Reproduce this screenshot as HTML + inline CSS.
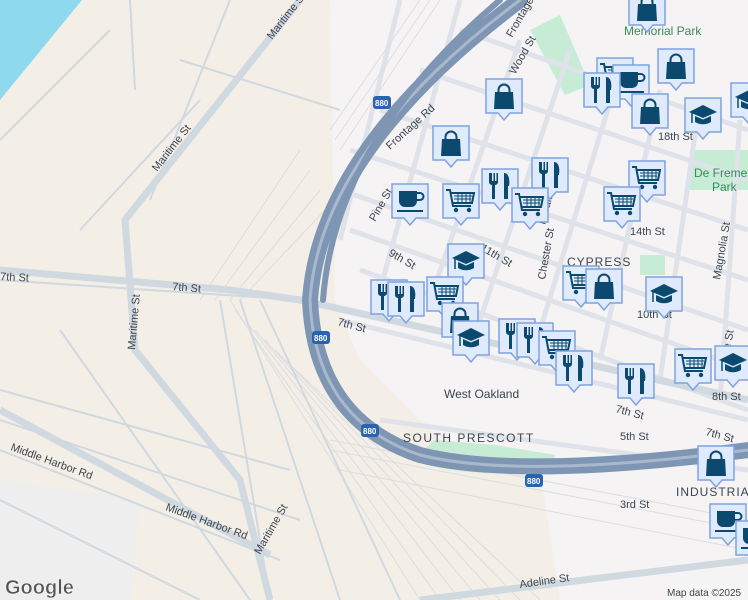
<!DOCTYPE html>
<html><head><meta charset="utf-8"><style>
html,body{margin:0;padding:0;width:748px;height:600px;overflow:hidden;background:#f3efe6}
svg{display:block}
text{font-family:"Liberation Sans",sans-serif}
</style></head><body>
<svg width="748" height="600" viewBox="0 0 748 600" xmlns="http://www.w3.org/2000/svg">
<defs>
<g id="m">
<path d="M1 1h36v34h-12l-6 7-6-7H1z" fill="#dfeafc" stroke="#7fa3e0" stroke-width="1.5"/>
</g>
<g id="shop"><use href="#m"/><path d="M10 14h18l1 17H9z" fill="#0b4a6e"/><path d="M13.5 15v-3a5.5 5.5 0 0 1 11 0v3" fill="none" stroke="#0b4a6e" stroke-width="2"/></g>
<g id="food"><use href="#m"/><path d="M8 5v9a3 3 0 0 0 3 3v14h3V17a3 3 0 0 0 3-3V5h-1.5v8h-1.5V5h-1.5v8h-1.5V5h-1.5v8H9.5V5z" fill="#0b4a6e"/><path d="M23 5c5 0 6 7 5 13h-1v13h-4z" fill="#0b4a6e"/></g>
<g id="cart"><use href="#m"/><path d="M4 7h4l3 16h18M9 10h23l-2 10H11" fill="none" stroke="#0b4a6e" stroke-width="2"/><path d="M12 13h18M12 16h17M16 10v10M20 10v10M24 10v10M28 10v10" stroke="#0b4a6e" stroke-width="1"/><circle cx="14" cy="27" r="2.2" fill="#0b4a6e"/><circle cx="27" cy="27" r="2.2" fill="#0b4a6e"/></g>
<g id="coffee"><use href="#m"/><path d="M8 8h18v10a6 6 0 0 1-6 6h-6a6 6 0 0 1-6-6z" fill="#0b4a6e"/><path d="M26 10h3a3.5 3.5 0 0 1 0 7h-3" fill="none" stroke="#0b4a6e" stroke-width="2"/><path d="M6 27h26v2H6z" fill="#0b4a6e"/></g>
<g id="school"><use href="#m"/><path d="M5 15l14-7 14 7-14 6z" fill="#0b4a6e"/><path d="M11 19v6c5 3 11 3 16 0v-6l-8 3.5z" fill="#0b4a6e"/><path d="M8 16v10" stroke="#0b4a6e" stroke-width="1.5"/></g>
</defs>

<path d="M0 0H82L0 100z" fill="#8fd9ef"/>
<path d="M330 0H748V600H560L540 470 440 440 360 360 335 300z" fill="#f5f3f4"/>
<path d="M0 480L140 500 130 600H0z" fill="#eeeeee"/>
<path d="M530 30l30 -15 30 70 -25 10z" fill="#c7ecd6"/>
<path d="M690 150h58v40h-58z" fill="#c7ecd6"/>
<path d="M410 460q60 20 140 10l5 -15 -60 -10 -60 -5z" fill="#c7ecd6"/>
<path d="M640 255h25v20h-25z" fill="#c7ecd6"/>

<g stroke="#dfe3e9" stroke-width="5" fill="none">
<path d="M340 190L748 330M350 150L748 280M380 110L748 230M420 70L748 180M460 30L748 130M350 230L748 370M360 270L748 410"/>
<path d="M400 0L340 240M460 0L380 290M520 40L430 300M570 50L480 320M620 70L540 330M660 90L600 360M700 100L660 380M740 120L720 400"/>
<path d="M340 320L748 420M380 420L748 470"/>
</g>
<g stroke="#dcdde2" stroke-width="1" fill="none">
<path d="M300 150L200 300M310 170L215 300M320 190L230 300M325 210L240 300"/>
<path d="M230 300L420 600M235 310L440 600M245 320L460 600M255 330L480 600M265 340L500 600M275 350L520 600M285 360L540 600"/>
<path d="M330 440L748 520M330 450L748 530M340 470L748 550"/>
<path d="M420 0L330 130M430 0L335 140M440 0L340 150"/>
</g>
<g stroke="#d0d8e0" stroke-width="2" fill="none">
<path d="M0 140L110 30M80 230L200 100M230 0L150 200M180 60L340 110M0 280L300 300M130 0L135 90M60 330L250 600M0 420L300 520M0 450L280 560M0 500L200 600M220 300L270 600M240 300L340 600M260 300L400 600M0 390L290 470"/>
</g>
<g stroke="#d0d8e0" stroke-width="7" fill="none">
<path d="M300 0L125 220L135 350L240 480L270 600"/>
<path d="M0 270L230 290L300 300L748 400"/>
<path d="M0 410L270 555"/>
<path d="M420 600L748 560"/>
</g>

<g fill="none" stroke-linecap="round">
<path d="M520 0Q320 150 310 300Q315 420 420 455Q520 480 748 450" stroke="#7e96b4" stroke-width="16"/>
<path d="M520 0Q320 150 310 300Q315 420 420 455Q520 480 748 450" stroke="#a9b9cc" stroke-width="3"/>
<path d="M500 0Q335 140 323 300" stroke="#7e96b4" stroke-width="6"/>
</g>

<g fill="#3c4550" font-size="11">
<text transform="translate(272 40) rotate(-52)">Maritime St</text>
<text transform="translate(157 172) rotate(-52)">Maritime St</text>
<text transform="translate(135 350) rotate(-85)">Maritime St</text>
<text transform="translate(260 555) rotate(-60)">Maritime St</text>
<text x="0" y="280" transform="rotate(3 0 280)">7th St</text>
<text x="172" y="290" transform="rotate(5 172 290)">7th St</text>
<text x="337" y="325" transform="rotate(15 337 325)">7th St</text>
<text x="615" y="412" transform="rotate(15 615 412)">7th St</text>
<text x="705" y="435" transform="rotate(15 705 435)">7th St</text>
<text transform="translate(10 450) rotate(20)">Middle Harbor Rd</text>
<text transform="translate(165 510) rotate(20)">Middle Harbor Rd</text>
<text transform="translate(390 150) rotate(-42)">Frontage Rd</text>
<text transform="translate(512 38) rotate(-60)">Frontage Rd</text>
<text x="520" y="588" transform="rotate(-8 520 588)">Adeline St</text>
<text x="620" y="508">3rd St</text>
<text x="620" y="440">5th St</text>
<text x="444" y="398" font-size="12">West Oakland</text>
<text x="403" y="442" font-size="12" letter-spacing="1.5">SOUTH PRESCOTT</text>
<text x="567" y="266" font-size="12" letter-spacing="1">CYPRESS</text>
<text x="676" y="496" font-size="12" letter-spacing="1">INDUSTRIAL</text>
<text x="694" y="177" font-size="12" fill="#3a8a5a">De Fremery</text>
<text x="712" y="191" font-size="12" fill="#3a8a5a">Park</text>
<text x="624" y="35" font-size="12" fill="#3a8a5a">Memorial Park</text>
<text x="630" y="235">14th St</text>
<text x="658" y="140">18th St</text>
<text x="388" y="255" transform="rotate(30 388 255)">9th St</text>
<text x="480" y="250" transform="rotate(30 480 250)">11th St</text>
<text x="637" y="318">10th St</text>
<text x="712" y="400">8th St</text>
<text transform="translate(375 222) rotate(-60)">Pine St</text>
<text transform="translate(545 280) rotate(-80)">Chester St</text>
<text transform="translate(545 225) rotate(-75)">Peralta St</text>
<text transform="translate(720 280) rotate(-80)">Magnolia St</text>
<text transform="translate(725 380) rotate(-80)">Adeline St</text>
<text transform="translate(515 75) rotate(-60)">Wood St</text>
</g>
<g font-size="8" fill="#fff" font-weight="bold">
<rect x="373" y="96" width="18" height="13" rx="3" fill="#2a64b0"/><text x="375" y="106">880</text>
<rect x="312" y="331" width="18" height="13" rx="3" fill="#2a64b0"/><text x="314" y="341">880</text>
<rect x="361" y="424" width="18" height="13" rx="3" fill="#2a64b0"/><text x="363" y="434">880</text>
<rect x="525" y="474" width="18" height="13" rx="3" fill="#2a64b0"/><text x="527" y="484">880</text>
</g>

<use href="#shop" x="628" y="-10"/>
<use href="#shop" x="657" y="48"/>
<use href="#cart" x="596" y="57"/>
<use href="#coffee" x="612" y="64"/>
<use href="#food" x="583" y="72"/>
<use href="#shop" x="485" y="78"/>
<use href="#shop" x="631" y="93"/>
<use href="#school" x="730" y="82"/>
<use href="#school" x="684" y="97"/>
<use href="#shop" x="432" y="125"/>
<use href="#food" x="531" y="157"/>
<use href="#cart" x="628" y="160"/>
<use href="#food" x="481" y="168"/>
<use href="#coffee" x="391" y="183"/>
<use href="#cart" x="442" y="183"/>
<use href="#cart" x="511" y="187"/>
<use href="#cart" x="603" y="186"/>
<use href="#school" x="447" y="243"/>
<use href="#cart" x="562" y="265"/>
<use href="#shop" x="585" y="268"/>
<use href="#school" x="645" y="276"/>
<use href="#food" x="370" y="279"/>
<use href="#food" x="387" y="281"/>
<use href="#cart" x="426" y="276"/>
<use href="#shop" x="441" y="302"/>
<use href="#school" x="452" y="320"/>
<use href="#food" x="498" y="318"/>
<use href="#food" x="516" y="322"/>
<use href="#cart" x="538" y="330"/>
<use href="#food" x="555" y="350"/>
<use href="#school" x="714" y="345"/>
<use href="#cart" x="674" y="348"/>
<use href="#food" x="617" y="363"/>
<use href="#shop" x="697" y="445"/>
<use href="#coffee" x="709" y="503"/>
<use href="#coffee" x="735" y="520"/>

<text x="5" y="594" font-size="20" font-weight="bold" fill="#555" stroke="#fff" stroke-width="0.5">Google</text>
<rect x="664" y="585" width="84" height="15" fill="#f5f5f5" opacity="0.8"/>
<text x="667" y="596" font-size="10" fill="#444">Map data ©2025</text>
</svg>
</body></html>
